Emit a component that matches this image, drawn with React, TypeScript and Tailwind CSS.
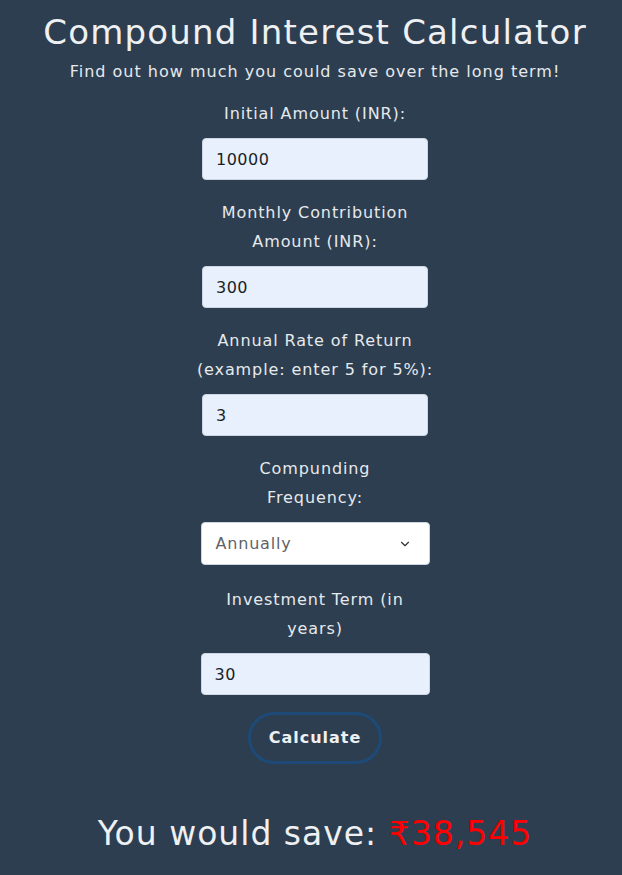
import {ChevronDown} from "lucide-react";

const labelCls = "text-[16px] tracking-[0.9px] leading-[29px] text-[#e6e9ec] text-center whitespace-nowrap";
const inputCls =
  "h-[42px] rounded-[4px] bg-[#e8f0fe] border border-[#cdd6e0] px-[13px] text-[16px] tracking-[0.5px] text-[#1b1f24] outline-none";

function Field({label, value, wide}: {label: string[]; value: string; wide?: boolean}) {
  return (
    <div className={`flex flex-col items-center ${wide ? "mt-[2px]" : ""}`}>
      <div className="flex flex-col items-center mb-[10px]">
        {label.map((l) => (
          <p key={l} className={labelCls}>{l}</p>
        ))}
      </div>
      <input
        readOnly
        value={value}
        className={`${inputCls} ${wide ? "w-[229px]" : "w-[226px]"}`}
      />
    </div>
  );
}

export default function App() {
  return (
    <div
      className="min-h-[875px] w-full bg-[#2d3e50] flex flex-col items-center pt-[11px] pl-[8px]"
      style={{fontFamily: '"DejaVu Sans", "Noto Sans", sans-serif'}}
    >
      <h1 className="text-[34px] tracking-[1.2px] leading-[42px] text-[#eef0f2] font-normal">Compound Interest Calculator</h1>
      <p className="text-[16px] tracking-[1px] leading-[24px] text-[#e6e9ec] mt-[7px] mb-[15px]">
        Find out how much you could save over the long term!
      </p>

      <div className="flex flex-col items-center gap-[18px]">
        <Field label={["Initial Amount (INR):"]} value="10000" />
        <Field label={["Monthly Contribution", "Amount (INR):"]} value="300" />
        <Field label={["Annual Rate of Return", "(example: enter 5 for 5%):"]} value="3" />
        <div className="flex flex-col items-center">
          <div className="flex flex-col items-center mb-[10px]">
            <p className={labelCls}>Compunding</p>
            <p className={labelCls}>Frequency:</p>
          </div>
          <div className="w-[229px] h-[43px] rounded-[4px] bg-white border border-[#cdd6e0] flex items-center justify-between pl-[14px] pr-[17px]">
            <span className="text-[16px] tracking-[0.8px] text-[#5f6368]">Annually</span>
            <ChevronDown className="w-[14px] h-[14px] text-[#333]" strokeWidth={2} />
          </div>
        </div>
        <Field label={["Investment Term (in", "years)"]} value="30" wide />
      </div>

      <button className="mt-[17px] w-[134px] h-[52px] rounded-full border-[3px] border-[#1e4a78] text-[16px] tracking-[1px] font-black text-[#eef0f2]">
        Calculate
      </button>

      <p className="mt-[50px] text-[33px] tracking-[1px] leading-[40px] text-[#eef0f2]">
        You would save: <span className="text-[#ff0000]">₹38,545</span>
      </p>
    </div>
  );
}
